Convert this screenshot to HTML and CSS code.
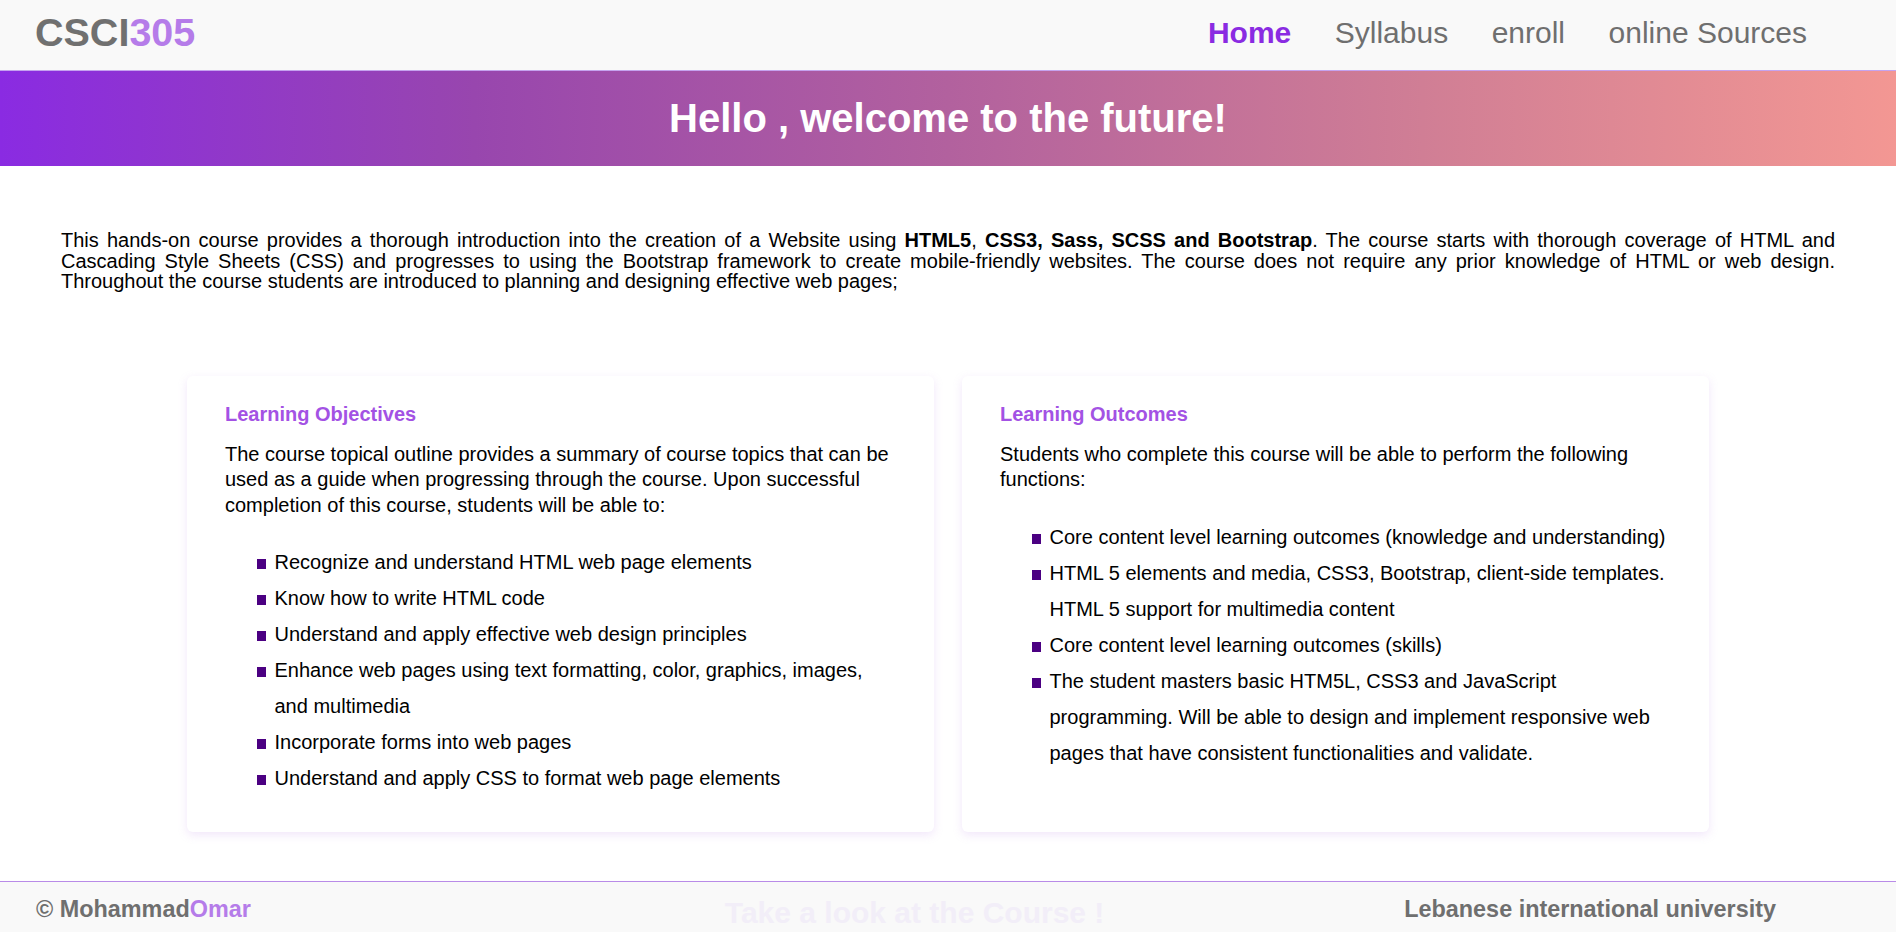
FILE: index.html
```html
<!DOCTYPE html>
<html lang="en">
<head>
<meta charset="utf-8">
<title>CSCI305</title>
<link rel="stylesheet" href="styles.css">
</head>
<body>
<header class="site-header">
  <div class="logo">CSCI<span class="accent">305</span></div>
  <nav class="main-nav">
    <a class="nav-link active" href="#">Home</a>
    <a class="nav-link" href="#">Syllabus</a>
    <a class="nav-link" href="#">enroll</a>
    <a class="nav-link" href="#">online Sources</a>
  </nav>
</header>

<section class="hero">
  <h1 class="hero-title">Hello , welcome to the future!</h1>
</section>

<main class="content">
  <p class="intro">This hands-on course provides a thorough introduction into the creation of a Website using <b>HTML5</b>, <b>CSS3, Sass, SCSS and Bootstrap</b>. The course starts with thorough coverage of HTML and Cascading Style Sheets (CSS) and progresses to using the Bootstrap framework to create mobile-friendly websites. The course does not require any prior knowledge of HTML or web design. Throughout the course students are introduced to planning and designing effective web pages;</p>

  <div class="cards">
    <article class="card">
      <h2 class="card-title">Learning Objectives</h2>
      <p class="card-text">The course topical outline provides a summary of course topics that can be used as a guide when progressing through the course. Upon successful completion of this course, students will be able to:</p>
      <ul class="card-list">
        <li>Recognize and understand HTML web page elements</li>
        <li>Know how to write HTML code</li>
        <li>Understand and apply effective web design principles</li>
        <li>Enhance web pages using text formatting, color, graphics, images, and multimedia</li>
        <li>Incorporate forms into web pages</li>
        <li>Understand and apply CSS to format web page elements</li>
      </ul>
    </article>
    <article class="card">
      <h2 class="card-title">Learning Outcomes</h2>
      <p class="card-text">Students who complete this course will be able to perform the following functions:</p>
      <ul class="card-list">
        <li>Core content level learning outcomes (knowledge and understanding)</li>
        <li>HTML 5 elements and media, CSS3, Bootstrap, client-side templates. HTML 5 support for multimedia content</li>
        <li>Core content level learning outcomes (skills)</li>
        <li>The student masters basic HTM5L, CSS3 and JavaScript programming. Will be able to design and implement responsive web pages that have consistent functionalities and validate.</li>
      </ul>
    </article>
  </div>
</main>

<footer class="site-footer">
  <div class="footer-brand">© Mohammad<span class="accent">Omar</span></div>
  <div class="footer-cta">Take a look at the Course !</div>
  <div class="footer-uni">Lebanese international university</div>
</footer>
</body>
</html>
```

FILE: styles.css
```css
* {
  box-sizing: border-box;
}

html,
body {
  margin: 0;
  padding: 0;
}

body {
  font-family: "Liberation Sans", Arial, sans-serif;
  background: #ffffff;
  color: #000000;
  min-height: 100vh;
  display: flex;
  flex-direction: column;
}

/* ---------- header ---------- */
.site-header {
  height: 71px;
  background: #f9f9f9;
  border-bottom: 1px solid #c5a3ef;
  display: flex;
  align-items: center;
  justify-content: space-between;
  padding: 0 89px 5px 35px;
}

.logo {
  font-size: 39.5px;
  font-weight: bold;
  color: #707070;
}

.accent {
  color: #b57ce9;
}

.main-nav {
  display: flex;
  gap: 43.5px;
}

.nav-link {
  font-size: 30px;
  color: #6f6f6f;
  text-decoration: none;
}

.nav-link.active {
  color: #8a2be2;
  font-weight: bold;
}

/* ---------- hero ---------- */
.hero {
  height: 95px;
  background: linear-gradient(to right,
    #8a2be2 0%,
    #9846ae 25%,
    #b2619e 50%,
    #d07e95 75%,
    #f39793 100%);
  display: flex;
  align-items: center;
  justify-content: center;
}

.hero-title {
  margin: 0;
  font-size: 40px;
  font-weight: bold;
  color: #ffffff;
}

/* ---------- content ---------- */
.content {
  padding: 64px 0 49px;
}

.intro {
  margin: 0 61px;
  font-size: 20px;
  line-height: 20.5px;
  text-align: justify;
}

.cards {
  display: grid;
  grid-template-columns: repeat(2, 747px);
  justify-content: center;
  gap: 28px;
  margin-top: 84px;
}

.card {
  background: #ffffff;
  border-radius: 6px;
  box-shadow: 0 3px 10px rgba(190, 140, 230, 0.22);
  padding: 27px 38px 36px;
}

.card-title {
  margin: 0;
  font-size: 20px;
  line-height: 23px;
  font-weight: bold;
  color: #a352e4;
}

.card-text {
  margin: 16px 0 0;
  font-size: 20px;
  line-height: 25.6px;
}

.card-list {
  list-style: none;
  margin: 26px 0 0;
  padding-left: 32px;
  font-size: 20px;
  line-height: 36px;
}

.card-list li {
  display: flex;
  align-items: baseline;
}

.card-list li::before {
  content: "";
  flex: none;
  width: 9px;
  height: 10px;
  background: #4b0082;
  margin-right: 8.5px;
}

/* ---------- footer ---------- */
.site-footer {
  flex: 1;
  background: #f9f9f9;
  border-top: 1px solid #b98be8;
  display: flex;
  align-items: flex-start;
  padding: 14px 120px 0 36px;
}

.footer-brand,
.footer-uni {
  font-size: 23.4px;
  font-weight: bold;
  color: #6f6f6f;
}

.footer-cta {
  margin-left: 474px;
  font-size: 30px;
  font-weight: bold;
  color: #f2eef8;
}

.footer-uni {
  margin-left: auto;
}
```
